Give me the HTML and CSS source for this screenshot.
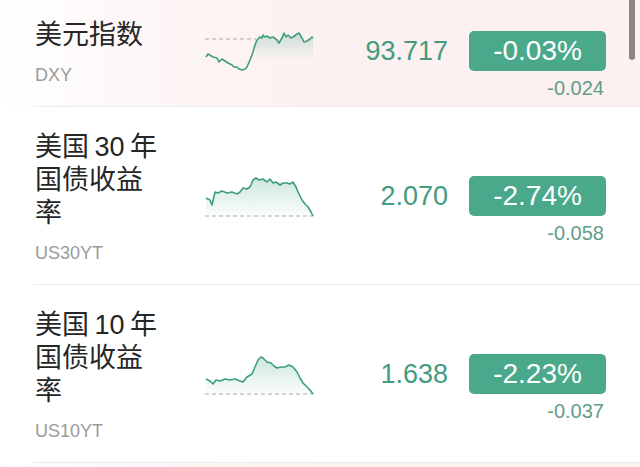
FILE: index.html
```html
<!DOCTYPE html>
<html lang="zh-CN">
<head>
<meta charset="utf-8">
<title>行情</title>
<link rel="stylesheet" href="styles.css">
</head>
<body>
<div class="list">
  <div class="row hl first">
    <div class="inner">
      <div class="name">
        <div class="title">美元指数</div>
        <div class="code">DXY</div>
      </div>
      <svg class="chart" width="110" height="46" viewBox="204 28 110 46">
        <defs>
          <linearGradient id="g1" x1="0" y1="0" x2="0" y2="1">
            <stop offset="0" stop-color="#4aa98a" stop-opacity="0.28"/>
            <stop offset="1" stop-color="#4aa98a" stop-opacity="0"/>
          </linearGradient>
        </defs>
        <line x1="205" y1="39" x2="256" y2="39" class="dash"/>
        <path fill="url(#g1)" d="M255,45 L257,40 258,39 260,37 262,38 263,35 265,37 267,36 270,38 273,37 277,40 279,43 282,38 284,33 286,37 288,35 291,38 293,37 297,34 299,33 302,38 304,42 307,41 310,39 312,37 313,38 L313,60 255,60 Z"/>
        <polyline class="ln" points="206,57 208,54 213,57 217,58 219,62 222,59 225,61 228,63 232,65 234,67 237,67 239,69 242,70 245,69 247,67 250,60 252,55 253,52 255,45 257,40 258,39 260,37 262,38 263,35 265,37 267,36 270,38 273,37 277,40 279,43 282,38 284,33 286,37 288,35 291,38 293,37 297,34 299,33 302,38 304,42 307,41 310,39 312,37 313,38"/>
      </svg>
      <div class="price">93.717</div>
      <div class="change">
        <div class="badge">-0.03%</div>
        <div class="diff">-0.024</div>
      </div>
    </div>
  </div>

  <div class="row">
    <div class="inner">
      <div class="name">
        <div class="title">美国 30 年<br>国债收益<br>率</div>
        <div class="code">US30YT</div>
      </div>
      <svg class="chart" width="110" height="46" viewBox="204 173 110 46">
        <defs>
          <linearGradient id="g2" x1="0" y1="0" x2="0" y2="1">
            <stop offset="0" stop-color="#4aa98a" stop-opacity="0.28"/>
            <stop offset="1" stop-color="#4aa98a" stop-opacity="0.02"/>
          </linearGradient>
        </defs>
        <path fill="url(#g2)" d="M206,198 L210,200 212,205 215,192 218,193 222,191 227,193 232,192 237,194 240,192 243,188 247,189 250,187 253,180 256,178 259,180 263,179 267,182 270,179 273,183 276,182 280,185 283,183 287,183 290,184 293,182 296,187 298,192 302,200 305,204 308,207 311,212 313,216 L206,216 Z"/>
        <line x1="205" y1="216" x2="313" y2="216" class="dash"/>
        <polyline class="ln" points="206,198 210,200 212,205 215,192 218,193 222,191 227,193 232,192 237,194 240,192 243,188 247,189 250,187 253,180 256,178 259,180 263,179 267,182 270,179 273,183 276,182 280,185 283,183 287,183 290,184 293,182 296,187 298,192 302,200 305,204 308,207 311,212 313,216"/>
      </svg>
      <div class="price">2.070</div>
      <div class="change">
        <div class="badge">-2.74%</div>
        <div class="diff">-0.058</div>
      </div>
    </div>
  </div>

  <div class="row">
    <div class="inner">
      <div class="name">
        <div class="title">美国 10 年<br>国债收益<br>率</div>
        <div class="code">US10YT</div>
      </div>
      <svg class="chart" width="110" height="46" viewBox="204 351 110 46">
        <defs>
          <linearGradient id="g3" x1="0" y1="0" x2="0" y2="1">
            <stop offset="0" stop-color="#4aa98a" stop-opacity="0.28"/>
            <stop offset="1" stop-color="#4aa98a" stop-opacity="0.02"/>
          </linearGradient>
        </defs>
        <path fill="url(#g3)" d="M206,379 L210,381 213,384 216,380 220,381 225,379 230,380 235,379 240,381 243,382 247,377 252,374 255,367 258,360 261,357 263,358 267,362 271,363 274,366 277,368 281,367 285,367 289,365 293,367 297,372 300,378 303,383 307,387 310,390 313,394 L206,394 Z"/>
        <line x1="205" y1="394" x2="313" y2="394" class="dash"/>
        <polyline class="ln" points="206,379 210,381 213,384 216,380 220,381 225,379 230,380 235,379 240,381 243,382 247,377 252,374 255,367 258,360 261,357 263,358 267,362 271,363 274,366 277,368 281,367 285,367 289,365 293,367 297,372 300,378 303,383 307,387 310,390 313,394"/>
      </svg>
      <div class="price">1.638</div>
      <div class="change">
        <div class="badge">-2.23%</div>
        <div class="diff">-0.037</div>
      </div>
    </div>
  </div>

  <div class="row hl next"></div>
</div>
<div class="scrollbar"></div>
</body>
</html>
```
FILE: styles.css
```css
html, body {
  margin: 0;
  padding: 0;
  background: #ffffff;
  overflow: hidden;
}
body {
  font-family: "Liberation Sans", "Noto Sans CJK SC", sans-serif;
  width: 640px;
  height: 467px;
  position: relative;
}
.list {
  display: flex;
  flex-direction: column;
}
.row {
  background: #ffffff;
}
.row.hl {
  background: linear-gradient(to right, #ffffff 0%, #fdf4f4 30%, #fcf0f0 60%, #fcf0f0 100%);
}
.row.first {
  margin-top: -5px;
}
.row.next {
  height: 40px;
}
.inner {
  margin-left: 33px;
  padding-left: 2px;
  display: flex;
  align-items: center;
  border-bottom: 1px solid #ececec;
}
.name {
  flex: 0 0 169px;
  padding: 24px 0 20px;
}
.title {
  font-family: "Liberation Sans", "Noto Sans CJK SC", sans-serif;
  font-size: 27px;
  line-height: 33px;
  word-spacing: -2px;
  color: #262626;
}
.code {
  margin-top: 12px;
  font-size: 18px;
  line-height: 22px;
  color: #9b9b9b;
}
.chart {
  flex: 0 0 110px;
  display: block;
}
.chart .ln {
  fill: none;
  stroke: #3f9c7d;
  stroke-width: 1.6;
  stroke-linejoin: round;
}
.chart .dash {
  stroke: #a9a9a9;
  stroke-width: 1;
  stroke-dasharray: 4 3;
}
.price {
  flex: 0 0 134px;
  text-align: right;
  font-size: 27px;
  line-height: 32px;
  color: #449b7f;
}
.change {
  margin-left: 21px;
  width: 137px;
  padding-top: 28px;
  display: flex;
  flex-direction: column;
}
.badge {
  height: 40px;
  line-height: 40px;
  border-radius: 5px;
  background: #4aa98a;
  color: #ffffff;
  font-size: 28px;
  text-align: center;
}
.diff {
  margin-top: 6px;
  padding-right: 2px;
  text-align: right;
  font-size: 20px;
  line-height: 22px;
  color: #5f9d8a;
}
.scrollbar {
  position: absolute;
  top: -6px;
  right: 5px;
  width: 6px;
  height: 66px;
  border-radius: 3px;
  background: rgba(0, 0, 0, 0.45);
}
```
